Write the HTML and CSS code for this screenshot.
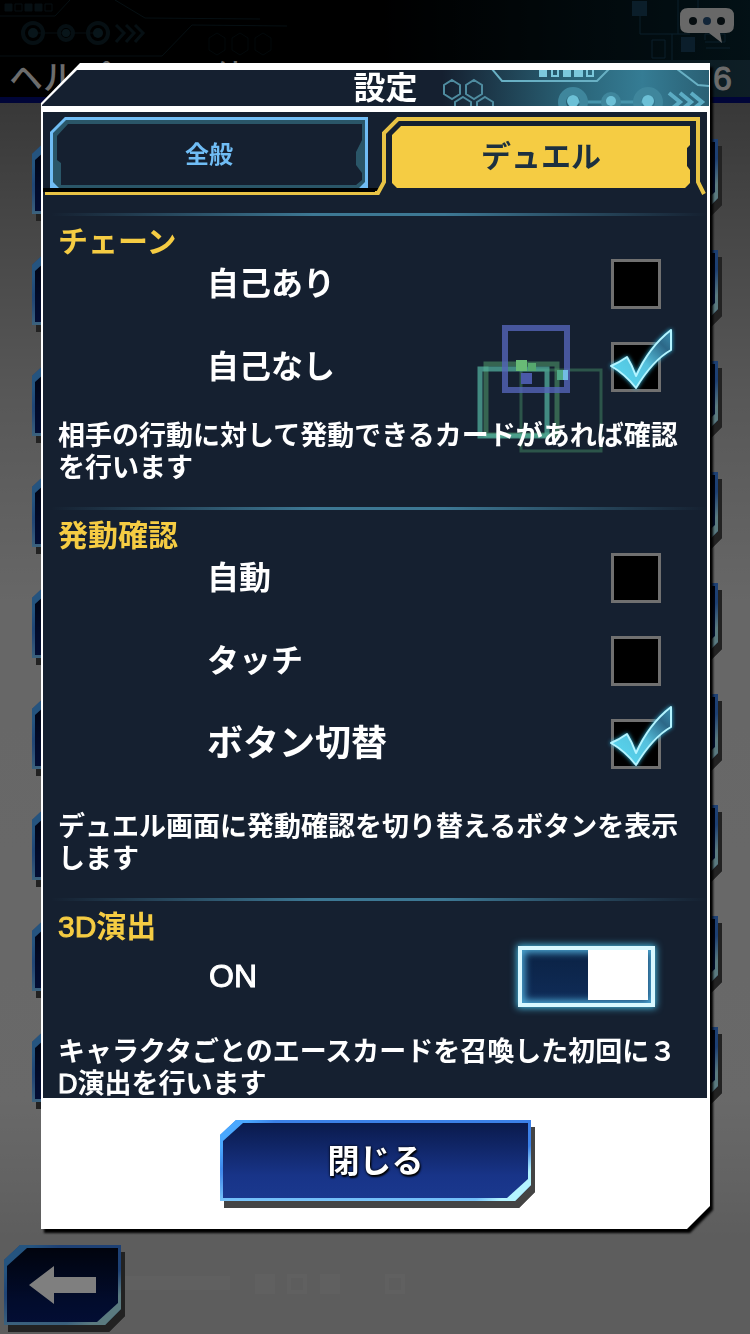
FILE: index.html
```html
<!DOCTYPE html>
<html lang="ja">
<head>
<meta charset="utf-8">
<meta name="viewport" content="width=device-width, initial-scale=1">
<title>設定</title>
<link rel="stylesheet" href="styles.css">
</head>
<body>
<div class="scene">
  <header class="topbar">
    <svg class="topbar-art topbar-art-left" width="300" height="97" viewBox="0 0 300 97" aria-hidden="true" fill="none" stroke="#143441">
      <path d="M0 16H55L70 0M115 0L145 18L260 19M0 56H162L192 25L287 26"/>
      <path d="M5 4h7v7h-7zM25 4h7v7h-7zM35 4h7v7h-7z" fill="#143441"/>
      <path d="M15 4h7v7h-7zM45 4h7v7h-7z"/>
      <path d="M33 33H98"/>
      <g stroke-width="4"><circle cx="33" cy="33" r="10"/><circle cx="66" cy="33" r="7"/><circle cx="98" cy="33" r="10"/></g>
      <g fill="#1c4858" stroke="none"><circle cx="33" cy="33" r="5"/><circle cx="66" cy="33" r="4"/><circle cx="98" cy="33" r="5"/></g>
      <path d="M116 25l8 8-8 9M126 25l8 8-8 9M135 25l8 8-8 9" stroke-width="3"/>
      <path d="M217 33l8 5v12l-8 5-8-5V38zM240 33l8 5v12l-8 5-8-5V38zM263 33l8 5v12l-8 5-8-5V38z" opacity=".6"/>
    </svg>
    <svg class="topbar-art topbar-art-right" width="150" height="60" viewBox="600 0 150 60" aria-hidden="true" fill="none" stroke="#1b4663">
      <path d="M632 1h15v15h-15zM681 37h14v15h-14z" fill="#1b4663" stroke="none"/>
      <path d="M640 16V34H690M678 0V34M652 40h13v18h-13zM672 34V60M698 0V10M705 40v-6h20v8h-20M706 48h24"/>
    </svg>
    <button class="chat" type="button" aria-label="チャット">
      <svg width="54" height="36" viewBox="0 0 54 36" aria-hidden="true">
        <path d="M8 0H46Q54 0 54 8V17Q54 25 46 25H40L42 35L29 25H8Q0 25 0 17V8Q0 0 8 0Z" fill="#d0d0d0"/>
        <circle cx="13" cy="13" r="4" fill="#0c1a20"/><circle cx="27" cy="13" r="4" fill="#244a70"/><circle cx="41" cy="13" r="4" fill="#0c1a20"/>
      </svg>
    </button>
    <div class="page-heading"><h1>ヘルプ・その他</h1><span>6</span></div>
  </header>
  <div class="menu" aria-hidden="true">
    <div class="shade"><div class="plate"></div></div>
    <div class="shade"><div class="plate"></div></div>
    <div class="shade"><div class="plate"></div></div>
    <div class="shade"><div class="plate"></div></div>
    <div class="shade"><div class="plate"></div></div>
    <div class="shade"><div class="plate"></div></div>
    <div class="shade"><div class="plate"></div></div>
    <div class="shade"><div class="plate"></div></div>
    <div class="shade"><div class="plate"></div></div>
  </div>
  <footer class="bottombar">
    <div class="shade">
      <button class="plate back" type="button" aria-label="戻る">
        <svg width="68" height="38" viewBox="0 0 68 38" aria-hidden="true"><path d="M0 19L25 0V11H67V27H25V38Z" fill="#fff"/></svg>
      </button>
    </div>
    <svg class="bottom-art" width="280" height="30" viewBox="0 0 280 30" aria-hidden="true" fill="#fff" opacity=".1">
      <path d="M0 6H105V20H0zM130 4h20v20h-20zM195 4h20v20h-20z"/>
      <path d="M164 6h16v16h-16zM262 6h16v16h-16z" fill="none" stroke="#fff" stroke-width="4"/>
    </svg>
  </footer>
</div>

<div class="overlay">
  <div class="dialog-shadow">
    <main class="dialog" role="dialog" aria-labelledby="dialog-title">
      <header class="dialog-head">
        <svg class="head-art" width="333" height="36" viewBox="375 70 333 36" aria-hidden="true" fill="none" stroke="#68b0c4">
          <g stroke="#4f8ca0" stroke-width="2">
            <path d="M451 80l8 5v9l-8 5-8-5v-9zM473 80l8 5v9l-8 5-8-5v-9zM462 97l8 5v9l-8 5-8-5v-9zM484 97l8 5v9l-8 5-8-5v-9z"/>
          </g>
          <path d="M491 69L501 81H596L608 69M676 69L697 85L708 86" stroke-width="2"/>
          <path d="M538 69h8v8h-8zM562 69h8v8h-8zM573 69h9v8h-9z" fill="#7cc8dc" stroke="none"/>
          <path d="M551 69h6v7h-6zM586 69h6v7h-6z" stroke="#7cc8dc" stroke-width="2"/>
          <path d="M572 102H647" stroke="#4795ac" stroke-width="3"/>
          <g stroke="#3f869c" stroke-width="8"><circle cx="572" cy="102" r="11"/><circle cx="610" cy="102" r="7" stroke-width="6"/><circle cx="647" cy="102" r="11"/></g>
          <g fill="#6cc0d6" stroke="none"><circle cx="572" cy="101" r="6"/><circle cx="610" cy="101" r="5"/><circle cx="647" cy="101" r="6"/></g>
          <path d="M668 93l11 9-11 9M679 93l11 9-11 9M690 93l11 9-11 9" stroke="#5cacc4" stroke-width="4"/>
        </svg>
        <h2 id="dialog-title">設定</h2>
      </header>

      <div class="dialog-body">
        <div class="tabs" role="tablist">
          <button class="tab" type="button" role="tab" aria-selected="false">
            <svg viewBox="0 0 332 84" preserveAspectRatio="none" aria-hidden="true">
              <path d="M0 76H332V80H0z" fill="#000"/>
              <path d="M2 80H332V83H2z" fill="#e8c345"/>
              <path d="M7 20L22 5H325V76H7z" fill="#2a5668"/>
              <path d="M14 24L25 12H319V28L313 40V53L319 61V68L313 73H18V51L14 48z" fill="#152030"/>
              <path d="M7 20L22 5H325V76H316L322 70V8H23L10 21V70L16 76H7z" fill="#70bdf5"/>
            </svg>
            <span>全般</span>
          </button>
          <button class="tab tab-active" type="button" role="tab" aria-selected="true">
            <svg viewBox="0 0 332 84" preserveAspectRatio="none" aria-hidden="true">
              <path d="M0 76H5L2 80H0z" fill="#000"/>
              <path d="M0 81H3L9 70V21L23 7H323V70L329 82" fill="none" stroke="#e8c345" stroke-width="4"/>
              <path d="M17 23L26 14H315V33L312 36V54L315 58V71L310 76H22L17 71z" fill="#f5cc43"/>
            </svg>
            <span>デュエル</span>
          </button>
        </div>

        <section class="group">
          <h3>チェーン</h3>
          <svg class="sparks" width="140" height="140" viewBox="470 320 140 140" aria-hidden="true" fill="none">
            <rect x="521" y="370" width="80" height="81" stroke="#3c7a5c" stroke-width="3" opacity=".6"/>
            <rect x="486" y="364" width="71" height="71" stroke="#4c9468" stroke-width="5" opacity=".6"/>
            <rect x="480" y="369" width="67" height="67" stroke="#56b8a4" stroke-width="5" opacity=".7"/>
            <rect x="505" y="328" width="62" height="62" stroke="#5464b8" stroke-width="6" opacity=".8"/>
            <path d="M516 360h11v11h-11z" fill="#68ba76"/><path d="M528 363h8v8h-8z" fill="#56a86e"/>
            <path d="M521 373h11v11h-11z" fill="#4a59a8"/>
            <path d="M557 370h6v10h-6z" fill="#4fa885"/><path d="M563 370h5v10h-5z" fill="#72bce4"/>
          </svg>
          <div class="options">
            <label class="option"><span>自己あり</span>
              <span class="check"><input type="checkbox"><svg viewBox="0 0 50 50" aria-hidden="true"><use href="#tick"/></svg></span></label>
            <label class="option"><span>自己なし</span>
              <span class="check"><input type="checkbox" checked><svg viewBox="0 0 50 50" aria-hidden="true"><use href="#tick"/></svg></span></label>
          </div>
          <p>相手の行動に対して発動できるカードがあれば確認を行います</p>
        </section>

        <section class="group group-roomy">
          <h3>発動確認</h3>
          <div class="options">
            <label class="option"><span>自動</span>
              <span class="check"><input type="checkbox"><svg viewBox="0 0 50 50" aria-hidden="true"><use href="#tick"/></svg></span></label>
            <label class="option"><span>タッチ</span>
              <span class="check"><input type="checkbox"><svg viewBox="0 0 50 50" aria-hidden="true"><use href="#tick"/></svg></span></label>
            <label class="option option-large"><span>ボタン切替</span>
              <span class="check"><input type="checkbox" checked><svg viewBox="0 0 50 50" aria-hidden="true"><use href="#tick"/></svg></span></label>
          </div>
          <p>デュエル画面に発動確認を切り替えるボタンを表示します</p>
        </section>

        <section class="group">
          <h3><span class="latin">3D</span>演出</h3>
          <div class="options">
            <label class="option option-switch"><span class="latin">ON</span><span class="switch"><input type="checkbox" role="switch" checked></span></label>
          </div>
          <p>キャラクタごとのエースカードを召喚した初回に&#xFF13;<span class="latin">D</span>演出を行います</p>
        </section>
      </div>

      <footer class="dialog-foot">
        <div class="shade"><button class="plate close" type="button">閉じる</button></div>
      </footer>
    </main>
  </div>
</div>

<svg class="defs" aria-hidden="true">
  <defs>
    <linearGradient id="tick-fill" x1="0" y1="1" x2="1" y2="0">
      <stop offset="0" stop-color="#58dcf4"/><stop offset=".5" stop-color="#55c0dc"/><stop offset=".8" stop-color="#2c6888"/><stop offset="1" stop-color="#3c90b0"/>
    </linearGradient>
    <path id="tick" d="M0 24Q9 20 16 15Q21 23 25 34Q38 5 60 -12V8Q42 18 25 46Q14 32 0 24Z" fill="url(#tick-fill)" stroke="#b4f4ff" stroke-width="2" stroke-linejoin="round"/>
  </defs>
</svg>
</body>
</html>
```
FILE: styles.css
```css
* { box-sizing: border-box; }

body {
  margin: 0;
  background: #5d5d5d;
  color: #fff;
  font-family: "Liberation Sans", "Noto Sans CJK JP", sans-serif;
}

h1, h2, h3, p { margin: 0; }

button {
  padding: 0;
  border: 0;
  background: none;
  color: inherit;
  font: inherit;
  cursor: pointer;
}

svg { display: block; }

.defs { position: absolute; width: 0; height: 0; }

.latin { font-weight: 400; -webkit-text-stroke: 1px currentColor; }

/* Screen behind the dialog */
.scene {
  display: flex;
  flex-direction: column;
  min-height: 100vh;
  background: linear-gradient(#707070 100px, #888 200px, #b0b0b0 400px, #cecece 600px, #d2d2d2 1100px, #c6c6c6 1180px, #bababa 1240px, #bababa);
}

.topbar {
  position: relative;
  display: flex;
  flex-direction: column;
  align-items: flex-end;
  height: 103px;
  padding: 8px 16px 0 9px;
  border-bottom: 6px solid #000a70;
  background:
    linear-gradient(90deg, transparent 55%, #1c3d4c) 0 60px / 100% 40px no-repeat,
    linear-gradient(90deg, #000 50%, #06222c);
}

.topbar-art { position: absolute; top: 0; }
.topbar-art-left { left: 0; opacity: .6; }
.topbar-art-right { right: 0; opacity: .8; }
.chat { position: relative; }

.page-heading {
  display: flex;
  justify-content: space-between;
  align-self: stretch;
  margin-top: 14px;
  padding-right: 2px;
  color: #d8d8d8;
  font-size: 34px;
  font-weight: 500;
  line-height: 40px;
}

.page-heading h1 { font-size: inherit; font-weight: inherit; }
.page-heading span { -webkit-text-stroke: 1px currentColor; }

.menu {
  display: grid;
  gap: 36px;
  padding: 36px 32px 0;
}

.menu .plate { height: 75px; }

.bottombar {
  display: flex;
  align-items: center;
  gap: 4px;
  margin-top: auto;
  padding: 0 4px 9px;
}

/* Bevelled button plate */
.shade { filter: drop-shadow(4px 7px 0 #444); }

.plate {
  position: relative;
  isolation: isolate;
  display: flex;
  align-items: center;
  justify-content: center;
  width: 100%;
  clip-path: polygon(16px 0, 100% 0, 100% calc(100% - 16px), calc(100% - 16px) 100%, 0 100%, 0 15px);
  background:
    linear-gradient(135deg, #4aa8ff 20px, transparent 40px),
    linear-gradient(315deg, #b4f4ff 22px, transparent 40px),
    linear-gradient(#3b80e8, #3b80e8 60%, #78c4fa);
}

.plate::before {
  content: "";
  position: absolute;
  z-index: -1;
  inset: 3px;
  clip-path: polygon(20px 0, 100% 0, 100% calc(100% - 19px), calc(100% - 21px) 100%, 0 100%, 0 18px);
  background: linear-gradient(#0a1a4c, #183488 70%, #1a388e);
}

.back { width: 117px; height: 80px; }

.scene .plate::before { background: linear-gradient(#02081c, #041858 70%, #061c68); }

/* Dialog */
.overlay {
  position: absolute;
  inset: 0;
  min-height: 100vh;
  padding: 63px 40px 0 41px;
  background: rgb(0 0 0 / 50%);
}

.dialog-shadow { filter: drop-shadow(3px 4px 1px #000); }

.dialog {
  padding: 7px 1px 0;
  clip-path: polygon(39px 0, 100% 0, 100% calc(100% - 23px), calc(100% - 23px) 100%, 0 100%, 0 40px);
  background: #fff;
}

.dialog-head {
  position: relative;
  display: flex;
  align-items: center;
  justify-content: center;
  height: 36px;
  clip-path: polygon(35px 0, 100% 0, 100% 100%, 0 100%, 0 35px);
  background: linear-gradient(90deg, #152030 60%, #2a6478 80%, #357c94 90%, #2a6074);
}

.head-art { position: absolute; right: 0; top: 0; }

.dialog-head h2 {
  position: relative;
  padding-left: 20px;
  font-size: 32px;
  line-height: 36px;
}

.dialog-body {
  margin: 6px 2px 0 1px;
  overflow: hidden;
  background: #152030;
}

.tabs {
  display: grid;
  grid-template-columns: 1fr 1fr;
  height: 84px;
  margin-bottom: 17px;
}

.tab {
  position: relative;
  padding-bottom: 4px;
  color: #70bdf5;
  font-size: 24px;
  font-weight: 700;
}

.tab svg { position: absolute; inset: 0; width: 100%; height: 100%; }
.tab span { position: relative; }
.tab-active { padding-bottom: 0; color: #1c3040; font-size: 30px; }

.group {
  position: relative;
  padding: 15px 16px 23px 15px;
}

.group:last-child { padding-bottom: 0; }
.group:last-child p { margin-bottom: -2px; }

.group::before {
  content: "";
  position: absolute;
  top: 0;
  left: 8px;
  right: 0;
  height: 3px;
  background: linear-gradient(90deg, transparent, #3d7894 40%, #3d7894 60%, transparent);
}

.group h3 {
  color: #f5cc43;
  font-size: 30px;
  line-height: 28px;
}

.options {
  display: grid;
  gap: 33px;
  margin: 3px 30px 28px 149px;
}

.group-roomy .options { margin-bottom: 42px; }

.option {
  display: flex;
  align-items: center;
  justify-content: space-between;
  height: 50px;
  font-size: 32px;
  font-weight: 700;
  line-height: 46px;
}

.option-large { font-size: 36px; }
.option-switch { height: 64px; padding-right: 6px; }
.option-switch > span:first-child { padding-left: 2px; }

.group p {
  position: relative;
  font-size: 27px;
  font-weight: 700;
  line-height: 32px;
}

.check { position: relative; }

.check input {
  display: block;
  width: 50px;
  height: 50px;
  margin: 0;
  border: 3px solid #707070;
  appearance: none;
  background: #000;
}

.check svg {
  position: absolute;
  inset: 0;
  overflow: visible;
  visibility: hidden;
  filter: drop-shadow(0 0 2px #2fb4dc);
  pointer-events: none;
}

.check input:checked + svg { visibility: visible; }

.switch {
  display: flex;
  width: 137px;
  height: 61px;
  border: 4px solid #d8f8ff;
  background: linear-gradient(#0b2244, #0f2c58);
  box-shadow: 0 0 7px 1px #48bce4, inset 0 0 7px 3px #4aa4d0;
}

.switch input {
  width: 100%;
  margin: 0;
  appearance: none;
  background: linear-gradient(#fff, #fff) right 3px top 0 / 60px 50px no-repeat;
}

.sparks {
  position: absolute;
  top: 107px;
  right: 97px;
  pointer-events: none;
}

.dialog-foot {
  display: flex;
  justify-content: center;
  padding: 22px 0 28px;
}

.close {
  width: 311px;
  height: 81px;
  padding-bottom: 6px;
  font-size: 32px;
  font-weight: 700;
  text-shadow: 0 0 3px #000, 1px 2px 2px #000;
}
```
